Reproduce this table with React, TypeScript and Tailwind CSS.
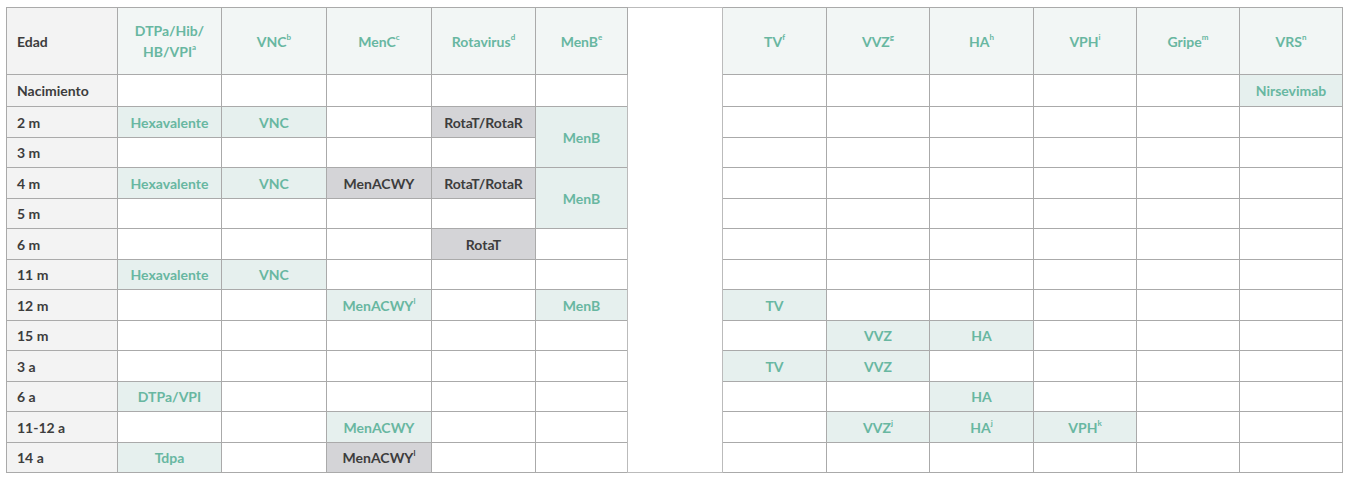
import React from "react";

type Cell = { t: string; sup?: string; k: "g" | "d" } | null;

const teal = "text-[#68b7a1]";
const dark = "text-[#3d3d3d]";

function Sup({ s }: { s: string }) {
  return <sup className="text-[8px] relative top-[-1px] align-super leading-none">{s}</sup>;
}

function C({ c }: { c: Cell }) {
  if (!c) return <td className="border border-[#aaaaaa] bg-white" />;
  return (
    <td
      className={
        "border border-[#aaaaaa] text-center " +
        (c.k === "g" ? "bg-[#e6f0ee] text-[#68b7a1]" : "bg-[#d4d4d7] text-[#3d3d3d]")
      }
    >
      {c.t}
      {c.sup && <Sup s={c.sup} />}
    </td>
  );
}

const g = (t: string, sup?: string): Cell => ({ t, sup, k: "g" });
const d = (t: string, sup?: string): Cell => ({ t, sup, k: "d" });

type Row = {
  label: string;
  h: string;
  a: (Cell | "skip" | "menb")[];
  b: Cell[];
};

const rows: Row[] = [
  { label: "Nacimiento", h: "h-[32px]", a: [null, null, null, null, null], b: [null, null, null, null, null, g("Nirsevimab")] },
  { label: "2 m", h: "h-[31px]", a: [g("Hexavalente"), g("VNC"), null, d("RotaT/RotaR"), "menb"], b: [null, null, null, null, null, null] },
  { label: "3 m", h: "h-[30px]", a: [null, null, null, null, "skip"], b: [null, null, null, null, null, null] },
  { label: "4 m", h: "h-[31px]", a: [g("Hexavalente"), g("VNC"), d("MenACWY"), d("RotaT/RotaR"), "menb"], b: [null, null, null, null, null, null] },
  { label: "5 m", h: "h-[30px]", a: [null, null, null, null, "skip"], b: [null, null, null, null, null, null] },
  { label: "6 m", h: "h-[31px]", a: [null, null, null, d("RotaT"), null], b: [null, null, null, null, null, null] },
  { label: "11 m", h: "h-[30px]", a: [g("Hexavalente"), g("VNC"), null, null, null], b: [null, null, null, null, null, null] },
  { label: "12 m", h: "h-[31px]", a: [null, null, g("MenACWY", "l"), null, g("MenB")], b: [g("TV"), null, null, null, null, null] },
  { label: "15 m", h: "h-[30px]", a: [null, null, null, null, null], b: [null, g("VVZ"), g("HA"), null, null, null] },
  { label: "3 a", h: "h-[31px]", a: [null, null, null, null, null], b: [g("TV"), g("VVZ"), null, null, null, null] },
  { label: "6 a", h: "h-[30px]", a: [g("DTPa/VPI"), null, null, null, null], b: [null, null, g("HA"), null, null, null] },
  { label: "11-12 a", h: "h-[31px]", a: [null, null, g("MenACWY"), null, null], b: [null, g("VVZ", "j"), g("HA", "j"), g("VPH", "k"), null, null] },
  { label: "14 a", h: "h-[30px]", a: [g("Tdpa"), null, d("MenACWY", "l"), null, null], b: [null, null, null, null, null, null] },
];

function H({ children }: { children: React.ReactNode }) {
  return <th className={"border border-[#aaaaaa] bg-[#f2f6f5] font-bold text-center leading-[21px] " + teal}>{children}</th>;
}

export default function App() {
  return (
    <div className="w-[1350px] h-[482px] bg-white pt-[7px] pl-[6px]" style={{ fontFamily: "Lato, 'Open Sans', sans-serif" }}>
      <table className="table-fixed border-collapse w-[1336px] text-[14px] font-bold border border-[#aaaaaa]">
        <colgroup>
          <col className="w-[111px]" />
          <col className="w-[104px]" />
          <col className="w-[105px]" />
          <col className="w-[105px]" />
          <col className="w-[104px]" />
          <col className="w-[92px]" />
          <col className="w-[95px]" />
          <col className="w-[104px]" />
          <col className="w-[103px]" />
          <col className="w-[104px]" />
          <col className="w-[103px]" />
          <col className="w-[103px]" />
          <col className="w-[103px]" />
        </colgroup>
        <tbody>
          <tr className="h-[67px]">
            <th className={"border border-[#aaaaaa] bg-[#f3f3f3] text-left pl-[10px] font-bold " + dark}>Edad</th>
            <H>
              DTPa/Hib/
              <br />
              HB/VPI<Sup s="a" />
            </H>
            <H>
              VNC<Sup s="b" />
            </H>
            <H>
              MenC<Sup s="c" />
            </H>
            <H>
              Rotavirus<Sup s="d" />
            </H>
            <H>
              MenB<Sup s="e" />
            </H>
            <td rowSpan={14} className="border border-[#bbbbbb] bg-white" />
            <H>
              TV<Sup s="f" />
            </H>
            <H>
              VVZ<Sup s="g" />
            </H>
            <H>
              HA<Sup s="h" />
            </H>
            <H>
              VPH<Sup s="i" />
            </H>
            <H>
              Gripe<Sup s="m" />
            </H>
            <H>
              VRS<Sup s="n" />
            </H>
          </tr>
          {rows.map((r, i) => (
            <tr key={i} className={r.h}>
              <td className={"border border-[#aaaaaa] bg-[#f3f3f3] text-left pl-[10px] " + dark}>{r.label}</td>
              {r.a.map((c, j) => {
                if (c === "skip") return null;
                if (c === "menb")
                  return (
                    <td key={j} rowSpan={2} className={"border border-[#aaaaaa] bg-[#e6f0ee] text-center " + teal}>
                      MenB
                    </td>
                  );
                return <C key={j} c={c} />;
              })}
              {r.b.map((c, j) => (
                <C key={"b" + j} c={c} />
              ))}
            </tr>
          ))}
        </tbody>
      </table>
    </div>
  );
}
